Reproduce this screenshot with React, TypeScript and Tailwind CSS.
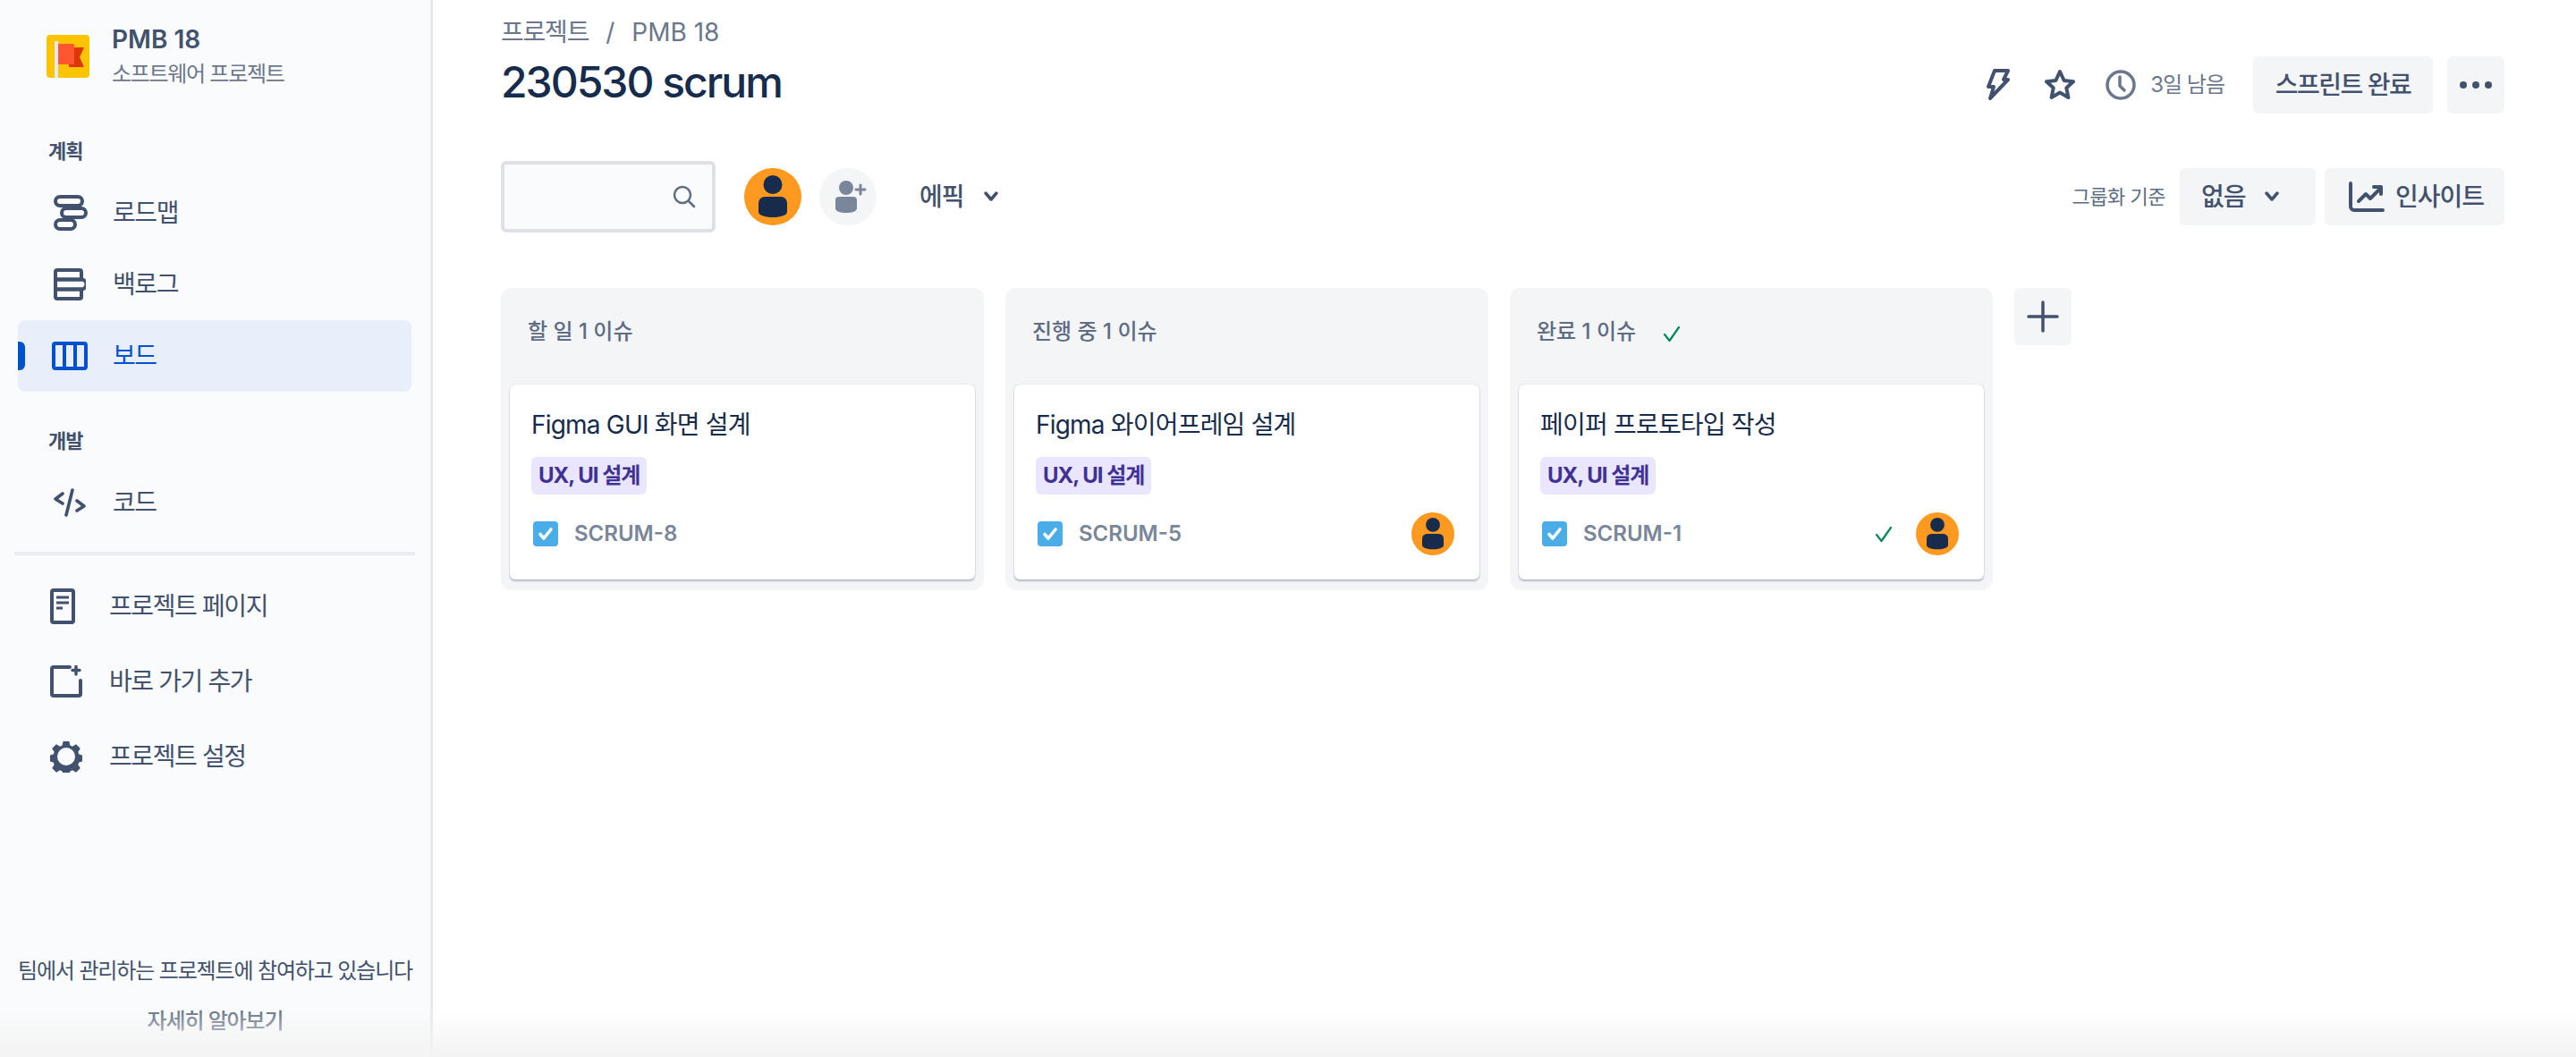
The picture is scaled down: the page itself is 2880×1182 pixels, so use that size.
import React from 'react';

const FONT = 'font-[Inter,"Noto_Sans_CJK_KR",sans-serif]';

const Avatar = ({ size }: { size: 'lg' | 'sm' }) => (
  <svg viewBox="0 0 64 64" className={size === 'lg' ? 'w-16 h-16' : 'w-12 h-12'}>
    <circle cx="32" cy="32" r="32" fill="#FF991F" />
    <ellipse cx="32" cy="18.500" rx="10.500" ry="10.500" fill="#172B4D" />
    <path d="M16 39a7 7 0 0 1 7-7h18a7 7 0 0 1 7 7v10c0 3.500-7 6-16 6s-16-2.500-16-6z" fill="#172B4D" />
  </svg>
);

const Chevron = () => (
  <svg viewBox="0 0 18 14" className="w-[18px] h-[14px]" fill="none" stroke="#42526E" strokeWidth="3.5" strokeLinecap="round" strokeLinejoin="round">
    <path d="M3 3l6 7 6-7" />
  </svg>
);

const Check = ({ className }: { className: string }) => (
  <svg viewBox="0 0 20 20" className={className} fill="none" stroke="#00875A" strokeWidth="2.200" strokeLinecap="round" strokeLinejoin="round">
    <path d="M2 11l5.5 7L18 3" />
  </svg>
);

const RoadmapIcon = () => (
  <svg viewBox="0 0 38 40" className="w-[38px] h-10" fill="none" stroke="#42526E" strokeWidth="4">
    <rect x="2" y="2" width="30" height="10" rx="5" />
    <rect x="9" y="15" width="27" height="10" rx="5" />
    <rect x="2" y="28" width="22" height="10" rx="5" />
  </svg>
);

const BacklogIcon = () => (
  <svg viewBox="0 0 36 36" className="w-9 h-9" fill="none" stroke="#42526E" strokeWidth="4" strokeLinejoin="round">
    <path d="M4 2h25a2 2 0 0 1 2 2v8.500H2V4a2 2 0 0 1 2-2z" />
    <path d="M2 12.500h29a5.500 5.500 0 0 1 0 11H2z" />
    <path d="M2 23.500h29V32a2 2 0 0 1-2 2H4a2 2 0 0 1-2-2z" />
  </svg>
);

const BoardIcon = () => (
  <svg viewBox="0 0 40 32" className="w-10 h-8 -ml-0.5" fill="none" stroke="#0052CC" strokeWidth="4">
    <rect x="2" y="2" width="36" height="28" rx="2" />
    <path d="M14 2v28M26 2v28" />
  </svg>
);

const CodeIcon = () => (
  <svg viewBox="0 0 36 32" className="w-9 h-8" fill="none" stroke="#42526E" strokeWidth="3.6" strokeLinecap="round" strokeLinejoin="round">
    <path d="M10 6l-8 6 8 5M26 14l8 6-8 5M21 2l-7 28" />
  </svg>
);

const PageIcon = () => (
  <svg viewBox="0 0 28 40" className="w-7 h-10" fill="none" stroke="#42526E" strokeWidth="4" strokeLinejoin="round">
    <rect x="2" y="2" width="24" height="36" rx="2" />
    <path d="M7 10h14M7 16h14M7 22h7" strokeWidth="3" />
  </svg>
);

const ShortcutIcon = () => (
  <svg viewBox="0 0 36 36" className="w-9 h-9" fill="none" stroke="#42526E" strokeWidth="4" strokeLinecap="round" strokeLinejoin="round">
    <path d="M22 2H4a2 2 0 0 0-2 2v28a2 2 0 0 0 2 2h28a2 2 0 0 0 2-2V17" />
    <path d="M29 1v9M25 5.500h8" strokeWidth="3.4" />
  </svg>
);

const GearIcon = () => (
  <svg viewBox="0 0 36 36" className="w-9 h-9">
    <path
      fillRule="evenodd"
      fill="#42526E"
      d="M14.600 1h6.800l1 4.600 2.600 1.100 4-2.500 4.800 4.800-2.500 4 1.100 2.600 4.600 1v6.800l-4.600 1-1.100 2.600 2.500 4-4.800 4.800-4-2.500-2.600 1.100-1 4.600h-6.800l-1-4.600-2.600-1.100-4 2.500-4.800-4.800 2.500-4-1.100-2.600-4.600-1v-6.800l4.600-1 1.100-2.600-2.500-4 4.800-4.800 4 2.500 2.600-1.100zM18 8a10 10 0 1 0 0 20 10 10 0 0 0 0-20z"
    />
  </svg>
);

const Logo = () => (
  <svg viewBox="0 0 48 48" className="w-12 h-12 shrink-0">
    <rect width="48" height="48" rx="4" fill="#FFC400" />
    <rect x="9" y="7" width="4" height="41" fill="#DEEBFF" />
    <path d="M25 14h17l-5 11 5 11H25z" fill="#DE350B" />
    <rect x="13" y="10" width="18" height="23" rx="1" fill="#FF5630" />
  </svg>
);

const NavRow = ({ icon, label, active }: { icon: React.ReactNode; label: string; active?: boolean }) => (
  <div className={`relative flex items-center h-20 mx-5 w-[440px] rounded-lg ${active ? 'bg-[#E8EFFB] text-[#0052CC]' : 'text-[#42526E]'}`}>
    {active && <div className="absolute left-0 top-6 w-2 h-8 bg-[#0052CC] rounded-r-md" />}
    <div className="w-[106px] pl-10 flex items-center">{icon}</div>
    <span className="text-[28px] leading-8 tracking-[-1.4px]">{label}</span>
  </div>
);

const LinkRow = ({ icon, label }: { icon: React.ReactNode; label: string }) => (
  <div className="flex items-center h-[84px] text-[#42526E]">
    <div className="w-[122px] pl-14 flex items-center">{icon}</div>
    <span className="text-[28px] leading-8 tracking-[-1.4px]">{label}</span>
  </div>
);

const Sidebar = () => (
  <div className="w-[484px] h-full shrink-0 flex flex-col bg-[#FAFBFC] border-r-[3px] border-[#E9EAEE]">
    <div className="flex items-center gap-[25px] pl-[52px] pt-[26px]">
      <Logo />
      <div>
        <div className="text-[28px] leading-9 font-semibold text-[#42526E]">PMB 18</div>
        <div className="mt-[5px] text-2xl leading-8 tracking-[-1.300px] text-[#6B778C]">소프트웨어 프로젝트</div>
      </div>
    </div>
    <div className="mt-14 pl-[54px] text-[22px] leading-7 font-bold tracking-[-1px] text-[#42526E]">계획</div>
    <div className="mt-[15px]">
      <NavRow icon={<RoadmapIcon />} label="로드맵" />
      <NavRow icon={<BacklogIcon />} label="백로그" />
      <NavRow icon={<BoardIcon />} label="보드" active />
    </div>
    <div className="mt-[41px] pl-[54px] text-[22px] leading-7 font-bold tracking-[-1px] text-[#42526E]">개발</div>
    <div className="mt-[15px]">
      <NavRow icon={<CodeIcon />} label="코드" />
    </div>
    <div className="mt-[15px] mx-4 h-1 w-[448px] bg-[#EBECF0]" />
    <div className="mt-[15px]">
      <LinkRow icon={<PageIcon />} label="프로젝트 페이지" />
      <LinkRow icon={<ShortcutIcon />} label="바로 가기 추가" />
      <LinkRow icon={<GearIcon />} label="프로젝트 설정" />
    </div>
    <div className="mt-auto pb-6 flex flex-col items-center gap-6 text-2xl leading-8 whitespace-nowrap tracking-[-1.150px]">
      <div className="text-[#42526E]">팀에서 관리하는 프로젝트에 참여하고 있습니다</div>
      <div className="text-[#6B778C] font-medium">자세히 알아보기</div>
    </div>
  </div>
);

const IssueCard = ({ title, issueKey, assigned, done }: { title: string; issueKey: string; assigned?: boolean; done?: boolean }) => (
  <div className="h-[218px] bg-white rounded-md shadow-[0_2px_2px_rgba(9,30,66,0.25),0_0_1px_rgba(9,30,66,0.31)] pl-6 pr-7 pt-[25px]">
    <div className="text-[28px] leading-10 tracking-[-0.800px] text-[#172B4D]">{title}</div>
    <div className="mt-4 h-[42px] w-fit px-2 rounded-md bg-[#EAE6FF] flex items-center text-2xl font-bold tracking-[-1px] text-[#403294]">UX, UI 설계</div>
    <div className="mt-5 h-12 flex items-center">
      <div className="w-7 h-7 ml-0.5 rounded bg-[#4BADE8] flex items-center justify-center">
        <svg viewBox="0 0 20 20" className="w-5 h-5" fill="none" stroke="#fff" strokeWidth="3.6" strokeLinecap="round" strokeLinejoin="round">
          <path d="M4 10.500l4 4.500 8-10" />
        </svg>
      </div>
      <span className="ml-[18px] text-2xl font-semibold text-[#7A869A]">{issueKey}</span>
      <div className="ml-auto flex items-center gap-[26px]">
        {done && <Check className="w-5 h-5" />}
        {assigned && <Avatar size="sm" />}
      </div>
    </div>
  </div>
);

const Column = ({ title, done, children }: { title: string; done?: boolean; children: React.ReactNode }) => (
  <div className="w-[540px] h-[338px] rounded-xl bg-[#F4F5F7] px-2.5">
    <div className="h-[108px] pl-5 flex items-center gap-[30px] pb-2.5">
      <span className="text-2xl font-medium text-[#5E6C84]">{title}</span>
      {done && <Check className="w-5 h-5 mt-1" />}
    </div>
    {children}
  </div>
);

const GreyButton = ({ className, children }: { className: string; children: React.ReactNode }) => (
  <div className={`h-16 rounded-md bg-[#F4F5F7] flex items-center text-[28px] font-medium text-[#42526E] ${className}`}>{children}</div>
);

const Header = () => (
  <div className="flex items-start justify-between">
    <div>
      <div className="flex items-center h-9 mt-[18px] text-[28px] text-[#6B778C]">
        <span className="tracking-[-1.200px]">프로젝트</span>
        <span className="mx-[19px]">/</span>
        <span>PMB 18</span>
      </div>
      <h1 className="mt-2.5 text-[48px] leading-[56px] font-medium tracking-[-2px] text-[#172B4D]">230530 scrum</h1>
    </div>
    <div className="flex items-center mt-[63px]">
      <svg viewBox="0 0 26 36" className="w-[26px] h-9" fill="none" stroke="#42526E" strokeWidth="4" strokeLinejoin="round">
        <path d="M9 2h15l-5 10h5L4 33l4-13H2z" />
      </svg>
      <svg viewBox="0 0 36 36" className="ml-[38px] w-9 h-9" fill="none" stroke="#42526E" strokeWidth="4" strokeLinejoin="round">
        <path d="M18 3l4.600 10 10.400 1.200-7.700 7.100 2.100 10.700-9.400-5.400-9.400 5.400 2.100-10.700L3 14.200 13.400 13z" />
      </svg>
      <svg viewBox="0 0 34 34" className="ml-[33px] w-[34px] h-[34px]" fill="none" stroke="#6B778C" strokeWidth="3.500" strokeLinecap="round" strokeLinejoin="round">
        <circle cx="17" cy="17" r="15" />
        <path d="M16 8v10l5 5" />
      </svg>
      <span className="ml-4 text-2xl tracking-[-1px] text-[#6B778C]">3일 남음</span>
      <GreyButton className="ml-8 w-[201px] justify-center tracking-[-1.500px]">스프린트 완료</GreyButton>
      <GreyButton className="ml-4 w-16 justify-center">
        <span className="flex gap-1.5">
          <span className="w-2 h-2 rounded-full bg-[#42526E]" />
          <span className="w-2 h-2 rounded-full bg-[#42526E]" />
          <span className="w-2 h-2 rounded-full bg-[#42526E]" />
        </span>
      </GreyButton>
    </div>
  </div>
);

const Toolbar = () => (
  <div className="mt-[53px] flex items-center">
    <div className="w-60 h-20 rounded-md border-4 border-[#DFE1E6] bg-[#FAFBFC] flex items-center justify-end pr-[18px]">
      <svg viewBox="0 0 26 26" className="w-[26px] h-[26px]" fill="none" stroke="#5E6C84" strokeWidth="2.500" strokeLinecap="round">
        <circle cx="11" cy="11" r="9" />
        <path d="M18 18l6 6" />
      </svg>
    </div>
    <div className="ml-8">
      <Avatar size="lg" />
    </div>
    <div className="ml-5 w-16 h-16 rounded-full bg-[#F4F5F7] flex items-center justify-center">
      <svg viewBox="0 0 36 40" className="w-9 h-10 overflow-visible" fill="#7A869A">
        <circle cx="16" cy="10" r="8" />
        <path d="M4 24a4 4 0 0 1 4-4h16a4 4 0 0 1 4 4v9c0 3-5 5-12 5S4 36 4 33z" />
        <path d="M32 7v10M27 12h10" stroke="#7A869A" strokeWidth="3" strokeLinecap="round" />
      </svg>
    </div>
    <span className="ml-12 text-[28px] tracking-[-1px] text-[#42526E] font-medium">에픽</span>
    <div className="ml-[21px]">
      <Chevron />
    </div>
    <span className="ml-auto text-[22px] tracking-[-0.500px] text-[#5E6C84]">그룹화 기준</span>
    <GreyButton className="ml-4 w-[152px] pl-6 gap-5 tracking-[-1px]">
      <span>없음</span>
      <Chevron />
    </GreyButton>
    <GreyButton className="ml-2.5 w-[201px] justify-center gap-3 pl-1">
      <svg viewBox="0 0 40 34" className="w-10 h-[34px]" fill="none" stroke="#42526E" strokeWidth="4" strokeLinecap="round" strokeLinejoin="round">
        <path d="M2 2v26a4 4 0 0 0 4 4h32" />
        <path d="M11 22l8-8 5 5 12-12M28 6h8v8" />
      </svg>
      <span className="tracking-[-1px]">인사이트</span>
    </GreyButton>
  </div>
);

const App = () => (
  <div className={`relative w-[2880px] h-[1182px] flex overflow-hidden bg-white ${FONT}`}>
    <Sidebar />
    <div className="flex-1 pl-[76px] pr-20">
      <Header />
      <Toolbar />
      <div className="mt-[62px] flex gap-6 items-start">
        <Column title="할 일 1 이슈">
          <IssueCard title="Figma GUI 화면 설계" issueKey="SCRUM-8" />
        </Column>
        <Column title="진행 중 1 이슈">
          <IssueCard title="Figma 와이어프레임 설계" issueKey="SCRUM-5" assigned />
        </Column>
        <Column title="완료 1 이슈" done>
          <IssueCard title="페이퍼 프로토타입 작성" issueKey="SCRUM-1" assigned done />
        </Column>
        <div className="w-16 h-16 rounded-md bg-[#F4F5F7] flex items-center justify-center">
          <svg viewBox="0 0 36 36" className="w-9 h-9" fill="none" stroke="#42526E" strokeWidth="3.500" strokeLinecap="round">
            <path d="M18 2v32M2 18h32" />
          </svg>
        </div>
      </div>
    </div>
    <div className="absolute inset-x-0 bottom-0 h-[52px] bg-gradient-to-b from-transparent to-[#F3F3F3] pointer-events-none" />
  </div>
);

export default App;
